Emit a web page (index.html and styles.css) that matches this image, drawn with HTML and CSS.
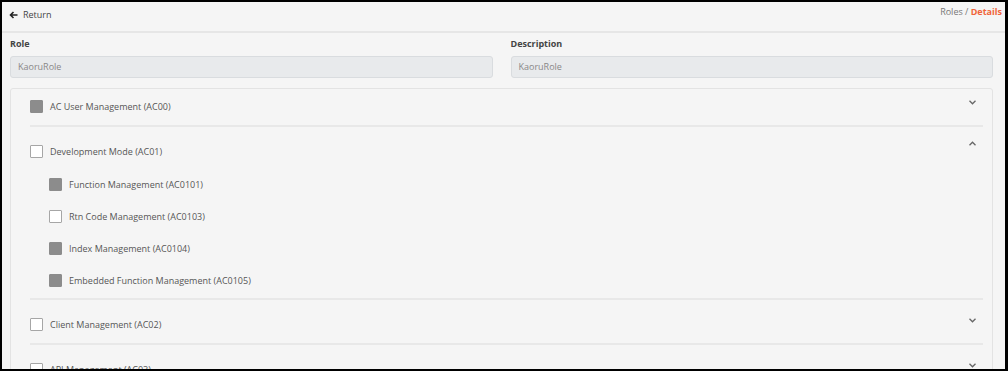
FILE: index.html
```html
<!DOCTYPE html>
<html lang="en">
<head>
    <meta charset="UTF-8">
    <title>Roles - Details</title>
    <link rel="stylesheet" href="styles.css">
</head>
<body>
<div class="frame">
    <div class="topbar">
        <a class="back" href="#">
            <svg class="arrow" width="9" height="8" viewBox="0 0 9 8"><path d="M8.5 4H1.5M4.5 1L1.5 4L4.5 7" fill="none" stroke="#222" stroke-width="1.6"/></svg>
            Return
        </a>
        <div class="crumbs">Roles / <b>Details</b></div>
    </div>

    <div class="fields">
        <div class="field">
            <label>Role</label>
            <div class="input">KaoruRole</div>
        </div>
        <div class="field">
            <label>Description</label>
            <div class="input">KaoruRole</div>
        </div>
    </div>

    <div class="panel">
        <div class="group">
            <div class="row head">
                <span class="box full"></span>
                <span class="name">AC User Management (AC00)</span>
                <svg class="chev" width="7" height="5" viewBox="0 0 7 5"><path d="M0.5 0.8L3.5 3.8L6.5 0.8" fill="none" stroke="#666" stroke-width="1.3"/></svg>
            </div>
        </div>
        <div class="group open">
            <div class="row head">
                <span class="box"></span>
                <span class="name">Development Mode (AC01)</span>
                <svg class="chev up" width="7" height="5" viewBox="0 0 7 5"><path d="M0.5 4.2L3.5 1.2L6.5 4.2" fill="none" stroke="#666" stroke-width="1.3"/></svg>
            </div>
            <div class="children">
                <div class="row child">
                    <span class="box full"></span>
                    <span class="name">Function Management (AC0101)</span>
                </div>
                <div class="row child">
                    <span class="box"></span>
                    <span class="name">Rtn Code Management (AC0103)</span>
                </div>
                <div class="row child">
                    <span class="box full"></span>
                    <span class="name">Index Management (AC0104)</span>
                </div>
                <div class="row child">
                    <span class="box full"></span>
                    <span class="name">Embedded Function Management (AC0105)</span>
                </div>
            </div>
        </div>
        <div class="group">
            <div class="row head">
                <span class="box"></span>
                <span class="name">Client Management (AC02)</span>
                <svg class="chev" width="7" height="5" viewBox="0 0 7 5"><path d="M0.5 0.8L3.5 3.8L6.5 0.8" fill="none" stroke="#666" stroke-width="1.3"/></svg>
            </div>
        </div>
        <div class="group">
            <div class="row head">
                <span class="box"></span>
                <span class="name">API Management (AC03)</span>
                <svg class="chev" width="7" height="5" viewBox="0 0 7 5"><path d="M0.5 0.8L3.5 3.8L6.5 0.8" fill="none" stroke="#666" stroke-width="1.3"/></svg>
            </div>
        </div>
    </div>
</div>
</body>
</html>
```

FILE: styles.css
```css
html, body {
    margin: 0;
    height: 100%;
    overflow: hidden;
}

body {
    background: #000;
    font-family: "Open Sans", "Noto Sans", Arial, sans-serif;
    font-size: 9px;
    color: #555;
}

.frame {
    box-sizing: border-box;
    margin: 2px 3px 2px 2px;
    height: calc(100% - 4px);
    background: #f5f5f5;
    overflow: hidden;
}

.topbar {
    display: flex;
    justify-content: space-between;
    align-items: flex-start;
    height: 29px;
    padding: 0 3px 0 7px;
    border-bottom: 2px solid #e6e6e6;
}

.back {
    display: flex;
    align-items: center;
    gap: 5px;
    margin-top: 6px;
    line-height: 14px;
    color: #444;
    text-decoration: none;
}

.crumbs {
    margin-top: 3px;
    line-height: 14px;
    color: #777;
}

.crumbs b {
    color: #f0643a;
}

.fields {
    display: flex;
    gap: 18px;
    padding: 4px 12px 0 8px;
}

.field {
    flex: 1;
}

.field label {
    display: block;
    font-weight: bold;
    color: #444;
    line-height: 14px;
    margin-bottom: 5px;
}

.input {
    box-sizing: border-box;
    height: 22px;
    line-height: 20px;
    padding: 0 7px;
    background: #e8eaec;
    border: 1px solid #d9dcdf;
    border-radius: 3px;
    color: #888;
}

.panel {
    margin: 10px 12px 0 8px;
    border: 1px solid #e3e3e3;
    border-radius: 3px;
    padding: 0 9px 0 19px;
}

.group {
    border-bottom: 2px solid #e8e8e8;
    padding: 18px 0 12px;
}

.group:first-child {
    padding-top: 11px;
}

.group.open {
    padding-bottom: 2px;
}

.row {
    display: flex;
    align-items: center;
    height: 13px;
}

.children {
    margin-top: 10px;
}

.row.child {
    height: 32px;
    padding-left: 19px;
}

.name {
    flex: 1;
    margin-left: 7px;
    line-height: 13px;
    color: #555;
}

.box {
    box-sizing: border-box;
    width: 13px;
    height: 13px;
    background: #fff;
    border: 1px solid #a6a6a6;
    border-radius: 1px;
    flex: none;
}

.box.full {
    background: #8c8c8c;
    border-color: #8c8c8c;
}

.chev {
    align-self: flex-start;
    margin: 0 7px 0 0;
}

.chev.up {
    margin-top: -4px;
}
```
